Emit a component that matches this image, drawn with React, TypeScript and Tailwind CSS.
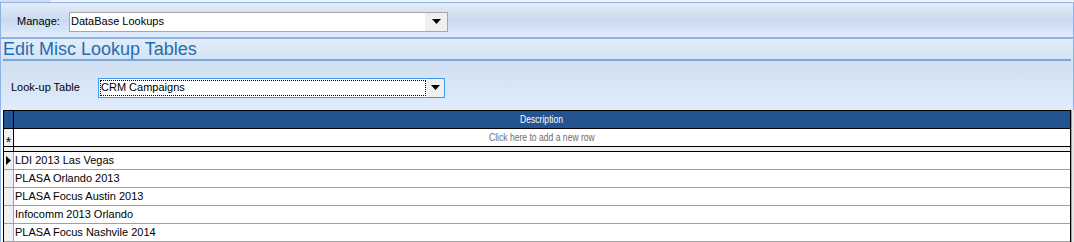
import React from "react";

const rows = [
  "LDI 2013 Las Vegas",
  "PLASA Orlando 2013",
  "PLASA Focus Austin 2013",
  "Infocomm 2013 Orlando",
  "PLASA Focus Nashvile 2014",
];

const Arrow = () => (
  <svg width="9" height="5" viewBox="0 0 9 5">
    <polygon points="0,0 9,0 4.5,5" fill="#000" />
  </svg>
);

const App: React.FC = () => {
  return (
    <div
      className="w-[1074px] h-[242px] overflow-hidden bg-[#dfeaf8] flex flex-col text-[11px] text-black"
      style={{ fontFamily: "'Liberation Sans', Arial, sans-serif" }}
    >
      {/* top tab strip */}
      <div className="h-[2px] flex">
        <div className="w-[51px] bg-[#d5dfeb]" />
        <div className="flex-1 bg-[#eef3f9]" />
      </div>

      {/* manage bar */}
      <div className="h-[37px] border-t border-x border-[#8db2e3] border-b-2 bg-gradient-to-b from-[#e4edf8] via-[#c9daf0] to-[#e0ecfc] flex items-center pl-[16px] pt-[3px]">
        <span className="w-[52px]">Manage:</span>
        <div className="w-[379px] h-[20px] border border-[#a6a6a6] bg-white flex items-center">
          <span className="flex-1 pl-[1px]">DataBase Lookups</span>
          <div className="w-[22px] h-[18px] bg-[#efefef] flex items-center justify-center">
            <Arrow />
          </div>
        </div>
      </div>

      {/* heading */}
      <div className="border-x border-[#8db2e3] bg-gradient-to-b from-[#e4edf8] to-[#d3e2f4]">
        <div className="h-[20px] pl-[2px] flex items-center text-[18px] leading-none text-[#1f6db1]">
          Edit Misc Lookup Tables
        </div>
        <div className="h-[2px] mx-[2px] bg-[#7aa6d6]" />
      </div>

      {/* look-up table selector */}
      <div className="h-[49px] border-x border-[#8db2e3] bg-gradient-to-b from-[#d0dff1] to-[#e0ecfc] flex items-center pl-[10px] pt-[4px]">
        <span className="w-[87px]">Look-up Table</span>
        <div className="w-[347px] h-[20px] border border-[#3d9cf0] bg-white flex items-center">
          <div className="flex-1 h-[16px] ml-[1px] border border-dotted border-black flex items-center leading-none">
            CRM Campaigns
          </div>
          <div className="w-[17px] h-[18px] ml-[1px] bg-[#efefef] flex items-center justify-center">
            <Arrow />
          </div>
        </div>
      </div>

      {/* grid */}
      <div className="flex-1 flex bg-white pl-[2px] border-l border-[#8db2e3]">
        <div className="flex-1 flex flex-col border-l border-t border-r border-black">
          {/* header */}
          <div className="h-[18px] flex bg-[#245391] border-b border-black shrink-0">
            <div className="w-[10px] border-r border-black" />
            <div className="flex-1 flex items-center justify-center text-white text-[11px]">
              <span className="inline-block scale-x-[0.78]">Description</span>
            </div>
          </div>
          {/* new row */}
          <div className="h-[18px] flex border-b border-black shrink-0">
            <div className="w-[10px] border-r border-black bg-[#f0f0f0] flex items-center justify-center text-[14px] leading-none pt-[8px]">
              *
            </div>
            <div className="flex-1 flex items-center justify-center text-[#6d6d6d] text-[11px]">
              <span className="inline-block scale-x-[0.78]">Click here to add a new row</span>
            </div>
          </div>
          <div className="h-[5px] flex border-b border-black shrink-0">
            <div className="w-[10px] border-r border-black bg-[#f0f0f0]" />
            <div className="flex-1 bg-[#f0f0f0]" />
          </div>
          {rows.map((r, i) => (
            <div key={r} className="h-[18px] flex border-b border-[#a0a0a0] shrink-0">
              <div className="w-[10px] border-r border-[#a0a0a0] bg-[#f0f0f0] flex items-center justify-center">
                {i === 0 && (
                  <svg width="5" height="9" viewBox="0 0 5 9">
                    <polygon points="0,0 5,4.5 0,9" fill="#000" />
                  </svg>
                )}
              </div>
              <div className="flex-1 flex items-center pl-[1px]">{r}</div>
            </div>
          ))}
        </div>
        <div className="w-[3px] bg-[#e3e3e3] border-l border-[#a0a0a0]" />
      </div>
    </div>
  );
};

export default App;
